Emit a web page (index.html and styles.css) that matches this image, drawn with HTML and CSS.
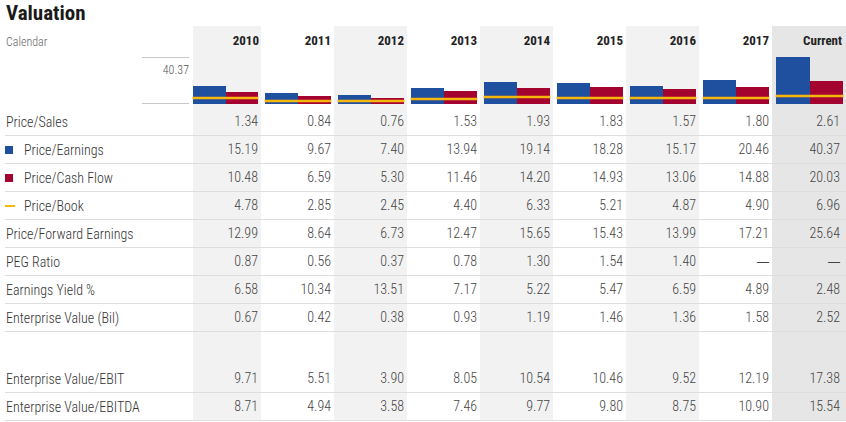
FILE: index.html
```html
<!DOCTYPE html>
<html>
<head>
<meta charset="utf-8">
<link rel="stylesheet" href="styles.css">
</head>
<body>
<div class="page">
  <h1 class="title">Valuation</h1>
  <div class="table">
    <div class="row head">
      <div class="cell label cal">Calendar</div>
      <div class="cell">2010</div><div class="cell">2011</div><div class="cell">2012</div><div class="cell">2013</div><div class="cell">2014</div><div class="cell">2015</div><div class="cell">2016</div><div class="cell">2017</div><div class="cell">Current</div>
    </div>
    <div class="row chart">
      <div class="cell axiscell"><div class="axis">40.37</div></div>
      <div class="cell"><div class="bars"><div class="bar pe" style="height:17.7px"></div><div class="bar pcf" style="height:12.2px"></div><div class="pb" style="bottom:4.6px"></div></div></div>
      <div class="cell"><div class="bars"><div class="bar pe" style="height:11.3px"></div><div class="bar pcf" style="height:7.7px"></div><div class="pb" style="bottom:2.3px"></div></div></div>
      <div class="cell"><div class="bars"><div class="bar pe" style="height:8.6px"></div><div class="bar pcf" style="height:6.2px"></div><div class="pb" style="bottom:1.9px"></div></div></div>
      <div class="cell"><div class="bars"><div class="bar pe" style="height:16.2px"></div><div class="bar pcf" style="height:13.3px"></div><div class="pb" style="bottom:4.1px"></div></div></div>
      <div class="cell"><div class="bars"><div class="bar pe" style="height:22.3px"></div><div class="bar pcf" style="height:16.5px"></div><div class="pb" style="bottom:6.4px"></div></div></div>
      <div class="cell"><div class="bars"><div class="bar pe" style="height:21.3px"></div><div class="bar pcf" style="height:17.4px"></div><div class="pb" style="bottom:5.1px"></div></div></div>
      <div class="cell"><div class="bars"><div class="bar pe" style="height:17.7px"></div><div class="bar pcf" style="height:15.2px"></div><div class="pb" style="bottom:4.7px"></div></div></div>
      <div class="cell"><div class="bars"><div class="bar pe" style="height:23.8px"></div><div class="bar pcf" style="height:17.3px"></div><div class="pb" style="bottom:4.7px"></div></div></div>
      <div class="cell"><div class="bars"><div class="bar pe" style="height:47px"></div><div class="bar pcf" style="height:23.3px"></div><div class="pb" style="bottom:7.1px"></div></div></div>
    </div>
    <div class="row data">
      <div class="cell label">Price/Sales</div>
      <div class="cell">1.34</div><div class="cell">0.84</div><div class="cell">0.76</div><div class="cell">1.53</div><div class="cell">1.93</div><div class="cell">1.83</div><div class="cell">1.57</div><div class="cell">1.80</div><div class="cell">2.61</div>
    </div>
    <div class="row data">
      <div class="cell label"><span class="key sq-blue"></span>Price/Earnings</div>
      <div class="cell">15.19</div><div class="cell">9.67</div><div class="cell">7.40</div><div class="cell">13.94</div><div class="cell">19.14</div><div class="cell">18.28</div><div class="cell">15.17</div><div class="cell">20.46</div><div class="cell">40.37</div>
    </div>
    <div class="row data">
      <div class="cell label"><span class="key sq-red"></span>Price/Cash Flow</div>
      <div class="cell">10.48</div><div class="cell">6.59</div><div class="cell">5.30</div><div class="cell">11.46</div><div class="cell">14.20</div><div class="cell">14.93</div><div class="cell">13.06</div><div class="cell">14.88</div><div class="cell">20.03</div>
    </div>
    <div class="row data">
      <div class="cell label"><span class="key dash"></span>Price/Book</div>
      <div class="cell">4.78</div><div class="cell">2.85</div><div class="cell">2.45</div><div class="cell">4.40</div><div class="cell">6.33</div><div class="cell">5.21</div><div class="cell">4.87</div><div class="cell">4.90</div><div class="cell">6.96</div>
    </div>
    <div class="row data">
      <div class="cell label">Price/Forward Earnings</div>
      <div class="cell">12.99</div><div class="cell">8.64</div><div class="cell">6.73</div><div class="cell">12.47</div><div class="cell">15.65</div><div class="cell">15.43</div><div class="cell">13.99</div><div class="cell">17.21</div><div class="cell">25.64</div>
    </div>
    <div class="row data">
      <div class="cell label">PEG Ratio</div>
      <div class="cell">0.87</div><div class="cell">0.56</div><div class="cell">0.37</div><div class="cell">0.78</div><div class="cell">1.30</div><div class="cell">1.54</div><div class="cell">1.40</div><div class="cell"><span class="na">—</span></div><div class="cell"><span class="na">—</span></div>
    </div>
    <div class="row data">
      <div class="cell label">Earnings Yield %</div>
      <div class="cell">6.58</div><div class="cell">10.34</div><div class="cell">13.51</div><div class="cell">7.17</div><div class="cell">5.22</div><div class="cell">5.47</div><div class="cell">6.59</div><div class="cell">4.89</div><div class="cell">2.48</div>
    </div>
    <div class="row data">
      <div class="cell label">Enterprise Value (Bil)</div>
      <div class="cell">0.67</div><div class="cell">0.42</div><div class="cell">0.38</div><div class="cell">0.93</div><div class="cell">1.19</div><div class="cell">1.46</div><div class="cell">1.36</div><div class="cell">1.58</div><div class="cell">2.52</div>
    </div>
    <div class="row spacer">
      <div class="cell"></div><div class="cell"></div><div class="cell"></div><div class="cell"></div><div class="cell"></div><div class="cell"></div><div class="cell"></div><div class="cell"></div><div class="cell"></div><div class="cell"></div>
    </div>
    <div class="row data">
      <div class="cell label">Enterprise Value/EBIT</div>
      <div class="cell">9.71</div><div class="cell">5.51</div><div class="cell">3.90</div><div class="cell">8.05</div><div class="cell">10.54</div><div class="cell">10.46</div><div class="cell">9.52</div><div class="cell">12.19</div><div class="cell">17.38</div>
    </div>
    <div class="row data">
      <div class="cell label">Enterprise Value/EBITDA</div>
      <div class="cell">8.71</div><div class="cell">4.94</div><div class="cell">3.58</div><div class="cell">7.46</div><div class="cell">9.77</div><div class="cell">9.80</div><div class="cell">8.75</div><div class="cell">10.90</div><div class="cell">15.54</div>
    </div>
  </div>
</div>
</body>
</html>
```

FILE: styles.css
```css
html, body {
  margin: 0;
  padding: 0;
  background: #fff;
}
body {
  font-family: "Liberation Sans Narrow", "Roboto Condensed", "DejaVu Sans Condensed", "Liberation Sans", sans-serif;
  color: #333;
  width: 846px;
  height: 422px;
  overflow: hidden;
}
.title {
  margin: 0;
  padding-left: 6px;
  height: 26px;
  line-height: 26px;
  font-size: 21px;
  font-weight: bold;
  color: #1a1a1a;
}
.row {
  display: grid;
  grid-template-columns: 193px 68px repeat(7, 73px) 74px;
}
.row > .cell:nth-child(even) {
  background: #f2f2f2;
}
.row > .cell:last-child {
  background: #e6e6e6;
}
.cell {
  text-align: right;
  padding-right: 3px;
  box-sizing: border-box;
}
.row > .cell.label {
  text-align: left;
  padding: 0 0 0 1px;
  margin-left: 5px;
}
.head {
  height: 30px;
  line-height: 30px;
  font-size: 13px;
  font-weight: bold;
  color: #222;
}
.head .cell:nth-child(2) { padding-right: 2px; }
.head .cell:last-child { padding-right: 4px; }
.head .cal {
  font-weight: 300;
  font-size: 12px;
  color: #666;
  line-height: 32px;
}
.chart {
  height: 52px;
}
.chart .cell {
  padding: 1px 3px 4px 4px;
}
.chart .cell:nth-child(2) {
  padding-left: 0;
}
.chart .axiscell {
  display: flex;
  justify-content: flex-end;
  padding: 1px 4px 4px 0;
}
.axis {
  width: 47px;
  height: 47px;
  box-sizing: border-box;
  border-top: 1px solid #c8c8c8;
  border-bottom: 1px solid #c8c8c8;
  font-size: 12px;
  font-weight: 300;
  line-height: 14px;
  padding-top: 5px;
  color: #555;
  text-align: right;
}
.bars {
  position: relative;
  height: 47px;
  display: flex;
  align-items: flex-end;
}
.bar {
  flex: 1;
}
.pe { background: #1f4f9f; }
.pcf { background: #a4022f; }
.pb {
  position: absolute;
  left: 0;
  right: 0;
  height: 2px;
  background: #f3b80b;
  box-shadow: 0 0 0 0.5px rgba(240, 150, 20, 0.6);
}
.data {
  height: 28px;
  font-size: 14px;
  font-weight: 300;
  color: #444;
}
.data .cell {
  border-bottom: 1px solid #dedede;
  line-height: 26px;
}
.data .cell:last-child {
  padding-right: 6px;
}
.data .cell.label {
  color: #333;
  display: flex;
  align-items: center;
}
.na {
  font-family: "Liberation Sans", sans-serif;
  font-weight: normal;
  font-size: 12px;
  color: #444;
}
.spacer {
  height: 33px;
}
.key {
  display: inline-block;
  margin-right: 11px;
}
.sq-blue {
  width: 8px;
  height: 8px;
  margin-left: -1px;
  background: #1f4f9f;
}
.sq-red {
  width: 8px;
  height: 8px;
  margin-left: -1px;
  background: #a4022f;
}
.dash {
  width: 10px;
  height: 2px;
  margin-left: -1px;
  margin-right: 9px;
  background: #f3b80b;
}
```
